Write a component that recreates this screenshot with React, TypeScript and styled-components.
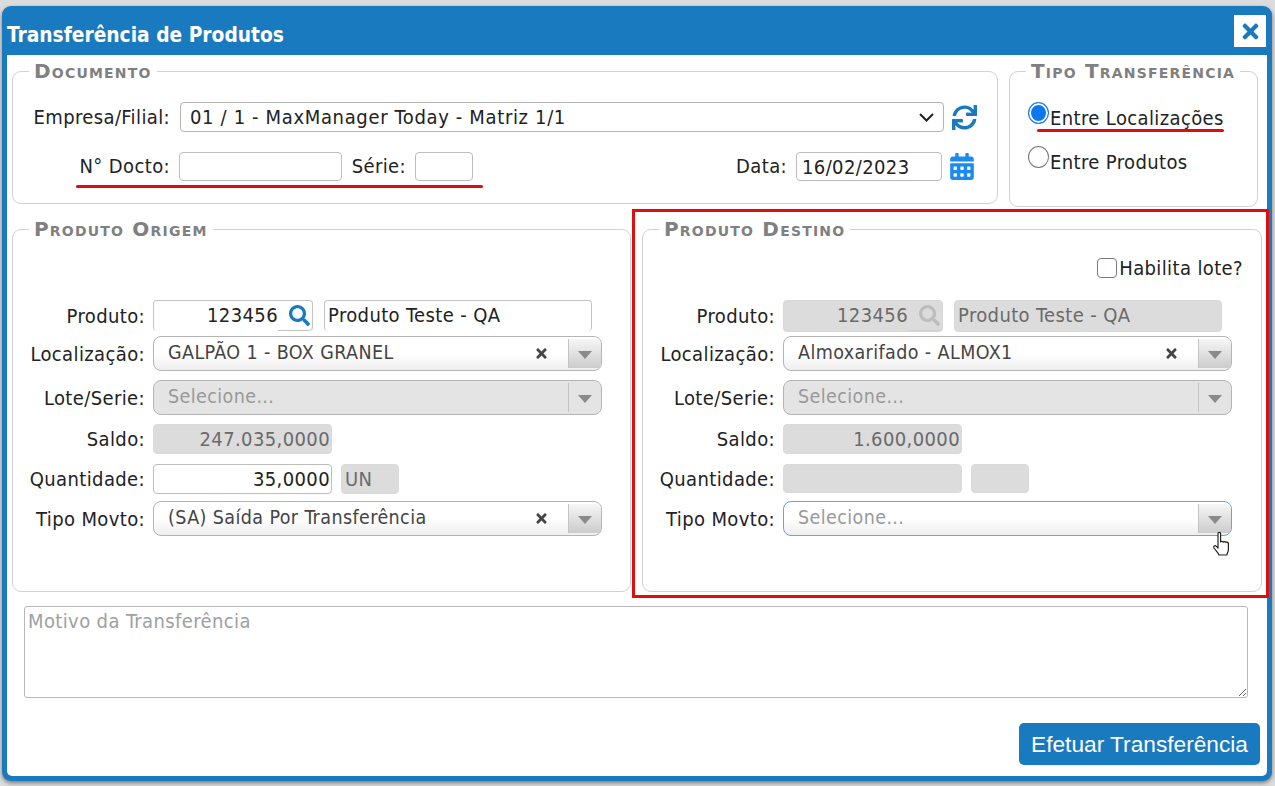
import React from "react";
import styled, { createGlobalStyle } from "styled-components";
import { FaSync, FaCalendarAlt, FaTimes, FaSearch } from "react-icons/fa";

const Global = createGlobalStyle`
  html, body { margin: 0; padding: 0; background: #dcdcdc; overflow: hidden; }
  * { box-sizing: border-box; }
`;

const BLUE = "#1a7abf";
const FONT = `"DejaVu Sans Condensed", "DejaVu Sans", sans-serif`;

const Page = styled.div`
  position: relative;
  width: 1275px;
  height: 786px;
  padding: 6px 3px 5px 2px;
  font-family: ${FONT};
  font-stretch: condensed;
  font-size: 20px;
  letter-spacing: 0.38px;
  color: #222;
`;
const Dialog = styled.div`
  height: 775px;
  background: ${BLUE};
  border-radius: 9px;
  padding: 0 5px 5px;
  display: flex;
  flex-direction: column;
  box-shadow: 0 2px 4px rgba(0, 0, 0, 0.45);
`;
const Header = styled.header`
  height: 49px;
  display: flex;
  align-items: flex-start;
  justify-content: space-between;
`;
const Title = styled.h1`
  margin: 17px 0 0;
  font-size: 20.75px;
  line-height: 24px;
  font-weight: 700;
  letter-spacing: 0;
  color: #fff;
`;
const CloseButton = styled.button`
  width: 32px;
  height: 32px;
  margin: 9px 1px 0 0;
  padding: 0;
  border: 0;
  background: #fff;
  color: ${BLUE};
  display: flex;
  align-items: center;
  justify-content: center;
  font-size: 23px;
`;
const Body = styled.main`
  flex: 1;
  background: #fff;
  border-radius: 0 0 5px 5px;
  padding: 6px 7px 11px 5px;
  display: flex;
  flex-direction: column;
`;
const TopRow = styled.div`
  display: flex;
  align-items: flex-start;
  gap: 11px;
  height: 146px;
`;
const MidRow = styled.div`
  display: flex;
  gap: 11px;
  margin-top: 12px;
`;
const Panel = styled.fieldset<{ $w: number; $h: number }>`
  width: ${(p) => p.$w}px;
  height: ${(p) => p.$h}px;
  flex: none;
  margin: 0;
  padding: 0;
  min-width: 0;
  border: 1px solid #d2d2d2;
  border-radius: 9px;
`;
const Legend = styled.legend`
  margin-left: 16px;
  padding: 0 5px;
  height: 20px;
  line-height: 20px;
  font-family: "DejaVu Sans", sans-serif;
  font-stretch: normal;
  font-size: 20px;
  letter-spacing: 1.2px;
  font-weight: 700;
  font-variant: small-caps;
  color: #808080;
`;
const DocRows = styled.div`
  padding: 21px 20px 0 0;
  display: flex;
  flex-direction: column;
  gap: 19px;
`;
const DocRow = styled.div`
  display: flex;
  align-items: center;
  height: 30px;
`;
const DocLabel = styled.label<{ $w?: number; $ml?: number }>`
  flex: none;
  width: ${(p) => (p.$w ? `${p.$w}px` : "auto")};
  margin-left: ${(p) => p.$ml ?? 0}px;
  text-align: right;
  white-space: nowrap;
`;
const NativeSelect = styled.div`
  margin-left: 10px;
  width: 765px;
  height: 30px;
  border: 1px solid #b5b5b5;
  border-radius: 4px;
  padding: 0 9px;
  display: flex;
  align-items: center;
  justify-content: space-between;
  letter-spacing: 0.65px;
  color: #222;
`;
const TextBox = styled.div<{ $w: number; $ml: number }>`
  flex: none;
  width: ${(p) => p.$w}px;
  height: 29px;
  margin-left: ${(p) => p.$ml}px;
  padding: 0 0 0 5px;
  line-height: 28px;
  white-space: nowrap;
  border: 1px solid #bdbdbd;
  border-radius: 4px;
  background: #fff;
`;
const RefreshIcon = styled(FaSync)`
  flex: none;
  margin-left: 8px;
  width: 25px;
  height: 25px;
  color: ${BLUE};
`;
const CalendarIcon = styled(FaCalendarAlt)`
  flex: none;
  margin: 0 3px 0 8px;
  width: 24px;
  height: 27px;
  color: #1a8cf0;
`;
const Push = styled.div`
  flex: 1;
`;
const RadioList = styled.div`
  padding: 21px 0 0 18px;
  display: flex;
  flex-direction: column;
  gap: 22px;
`;
const RadioRow = styled.label`
  display: flex;
  align-items: flex-start;
  height: 22px;
  line-height: 32px;
  white-space: nowrap;
`;
const Radio = styled.input`
  appearance: none;
  flex: none;
  width: 21px;
  height: 22px;
  margin: 0 1px 0 0;
  border-radius: 50%;
  border: 1.5px solid #777;
  background: #fff;
  &:checked {
    border: 1.5px solid #1a7fe8;
    box-shadow: inset 0 0 0 2px #fff;
    background: #0d78ee;
  }
`;
const PanelBody = styled.div`
  padding: 19px 0 0 0;
  display: flex;
  flex-direction: column;
`;
const CheckRow = styled.label`
  height: 20px;
  margin-bottom: 22px;
  padding-right: 18px;
  display: flex;
  justify-content: flex-end;
  align-items: center;
  white-space: nowrap;
`;
const Check = styled.input`
  appearance: none;
  flex: none;
  width: 20px;
  height: 20px;
  margin: 0 2px 0 0;
  border: 1.5px solid #777;
  border-radius: 4px;
  background: #fff;
`;
const FormRow = styled.div<{ $h: number; $mb: number }>`
  display: grid;
  grid-template-columns: 132px auto;
  justify-content: start;
  column-gap: 8px;
  height: ${(p) => p.$h}px;
  margin-bottom: ${(p) => p.$mb}px;
  align-items: center;
`;
const RowLabel = styled.label`
  text-align: right;
  white-space: nowrap;
`;
const Fields = styled.div`
  display: flex;
  height: 100%;
  align-items: stretch;
`;
const CodeField = styled.div<{ $off?: boolean }>`
  width: 160px;
  display: flex;
  justify-content: flex-end;
  line-height: 29px;
  border: 1px solid ${(p) => (p.$off ? "#d8d8d8" : "#c4c4c4")};
  border-bottom: ${(p) => (p.$off ? "1px solid #d8d8d8" : "0")};
  border-radius: 4px;
  background: ${(p) => (p.$off ? "#dcdcdc" : "#fff")};
  color: ${(p) => (p.$off ? "#6a6a6a" : "#222")};
`;
const SearchSlot = styled.div<{ $off?: boolean }>`
  width: 34px;
  padding: 4px 0 0 11px;
  border-bottom: 1px solid ${(p) => (p.$off ? "#cfcfcf" : "#c4c4c4")};
  border-radius: 0 0 4px 0;
  color: ${(p) => (p.$off ? "#bdbdbd" : BLUE)};
  font-size: 21px;
  line-height: 1;
`;
const NameField = styled.div<{ $off?: boolean }>`
  width: 268px;
  margin-left: 11px;
  padding-left: 3px;
  line-height: 29px;
  border: 1px solid ${(p) => (p.$off ? "#d8d8d8" : "#c4c4c4")};
  border-bottom: ${(p) => (p.$off ? "1px solid #d8d8d8" : "0")};
  border-radius: 4px;
  background: ${(p) => (p.$off ? "#dcdcdc" : "#fff")};
  color: ${(p) => (p.$off ? "#6a6a6a" : "#222")};
`;
const Combo = styled.div<{ $off?: boolean; $focus?: boolean }>`
  width: 449px;
  height: 35px;
  display: flex;
  align-items: stretch;
  border: 1px solid ${(p) => (p.$focus ? "#6d9fd8" : "#b4b4b4")};
  border-radius: 8px;
  overflow: hidden;
  background: ${(p) =>
    p.$off ? "#e4e4e4" : "linear-gradient(#fff 50%, #eeeeee)"};
`;
const ComboText = styled.div<{ $muted?: boolean }>`
  flex: 1;
  padding-left: 14px;
  line-height: 31px;
  font-size: 19.5px;
  letter-spacing: 0.4px;
  color: ${(p) => (p.$muted ? "#999" : "#444")};
`;
const ComboClear = styled.div`
  width: 30px;
  margin-right: 12px;
  display: flex;
  align-items: center;
  justify-content: center;
  color: #444;
  font-size: 15px;
`;
const ComboArrow = styled.div<{ $off?: boolean }>`
  flex: none;
  width: 33px;
  margin: 2px 0;
  border-left: 1px solid #c4c4c4;
  display: flex;
  align-items: center;
  justify-content: center;
  background: ${(p) =>
    p.$off ? "transparent" : "linear-gradient(#f6f6f6, #cccccc)"};
  &::after {
    content: "";
    border-style: solid;
    border-width: 8px 7px 0;
    border-color: #8a8a8a transparent transparent;
    margin-top: 2px;
  }
`;
const Amount = styled.div<{ $off?: boolean }>`
  width: 179px;
  padding-right: 1px;
  text-align: right;
  line-height: 28px;
  border: 1px solid ${(p) => (p.$off ? "#dadada" : "#bdbdbd")};
  border-radius: 4px;
  background: ${(p) => (p.$off ? "#dcdcdc" : "#fff")};
  color: ${(p) => (p.$off ? "#6a6a6a" : "#222")};
`;
const Unit = styled.div`
  width: 58px;
  margin-left: 9px;
  padding-left: 3px;
  line-height: 28px;
  border: 1px solid #dadada;
  border-radius: 4px;
  background: #dcdcdc;
  color: #6a6a6a;
`;
const Reason = styled.div`
  width: 1224px;
  height: 92px;
  margin: 14px 0 0 12px;
  padding: 2px 3px;
  border: 1px solid #b8b8b8;
  border-radius: 3px;
  color: #a0a0a0;
  overflow: auto;
  resize: both;
`;
const Footer = styled.div`
  margin-top: 25px;
  display: flex;
  justify-content: flex-end;
`;
const SubmitButton = styled.button`
  width: 241px;
  height: 42px;
  border: 0;
  padding: 0;
  border-radius: 5px;
  background: ${BLUE};
  color: #fff;
  font-family: "Liberation Sans", Arial, sans-serif;
  font-size: 22.7px;
`;
const RedLine = styled.div<{ $x: number; $y: number; $w: number }>`
  position: absolute;
  left: ${(p) => p.$x}px;
  top: ${(p) => p.$y}px;
  width: ${(p) => p.$w}px;
  height: 3px;
  border-radius: 2px;
  background: #e00d0d;
`;
const RedBox = styled.div`
  position: absolute;
  left: 632px;
  top: 209px;
  width: 637px;
  height: 389px;
  border: 3px solid #e00d0d;
  pointer-events: none;
`;
const Cursor = styled.svg`
  position: absolute;
  left: 1211px;
  top: 531px;
  width: 22px;
  height: 28px;
`;
const Chevron = styled.svg`
  width: 15px;
  height: 9px;
`;

type Side = {
  off?: boolean;
  location: string;
  saldo: string;
  qty: string;
  unit: string;
  tipo: string;
};

const ComboBox = ({ text, off, muted, clear, focus }: { text: string; off?: boolean; muted?: boolean; clear?: boolean; focus?: boolean }) => (
  <Combo $off={off} $focus={focus}>
    <ComboText $muted={muted}>{text}</ComboText>
    {clear && (
      <ComboClear>
        <FaTimes />
      </ComboClear>
    )}
    <ComboArrow $off={off} />
  </Combo>
);

const ProductPanel = ({ side, title, w }: { side: Side; title: string; w: number }) => (
  <Panel $w={w} $h={373}>
    <Legend>{title}</Legend>
    <PanelBody>
      <CheckRow>
        {side.off && (
          <>
            <Check type="checkbox" />
            Habilita lote?
          </>
        )}
      </CheckRow>
      <FormRow $h={28} $mb={8}>
        <RowLabel>Produto:</RowLabel>
        <Fields>
          <CodeField $off={side.off}>
            123456
            <SearchSlot $off={side.off}>
              <FaSearch />
            </SearchSlot>
          </CodeField>
          <NameField $off={side.off}>Produto Teste - QA</NameField>
        </Fields>
      </FormRow>
      <FormRow $h={35} $mb={9}>
        <RowLabel>Localização:</RowLabel>
        <ComboBox text={side.location} clear />
      </FormRow>
      <FormRow $h={35} $mb={9}>
        <RowLabel>Lote/Serie:</RowLabel>
        <ComboBox text="Selecione..." off muted />
      </FormRow>
      <FormRow $h={28} $mb={12}>
        <RowLabel>Saldo:</RowLabel>
        <Fields>
          <Amount $off>{side.saldo}</Amount>
        </Fields>
      </FormRow>
      <FormRow $h={29} $mb={8}>
        <RowLabel>Quantidade:</RowLabel>
        <Fields>
          <Amount $off={side.off}>{side.qty}</Amount>
          <Unit>{side.unit}</Unit>
        </Fields>
      </FormRow>
      <FormRow $h={35} $mb={0}>
        <RowLabel>Tipo Movto:</RowLabel>
        {side.off ? (
          <ComboBox text={side.tipo} muted focus />
        ) : (
          <ComboBox text={side.tipo} clear />
        )}
      </FormRow>
    </PanelBody>
  </Panel>
);

export default function App() {
  return (
    <Page>
      <Global />
      <Dialog>
        <Header>
          <Title>Transferência de Produtos</Title>
          <CloseButton aria-label="Fechar">
            <FaTimes />
          </CloseButton>
        </Header>
        <Body>
          <TopRow>
            <Panel $w={986} $h={143}>
              <Legend>Documento</Legend>
              <DocRows>
                <DocRow>
                  <DocLabel $w={157}>Empresa/Filial:</DocLabel>
                  <NativeSelect>
                    01 / 1 - MaxManager Today - Matriz 1/1
                    <Chevron viewBox="0 0 15 9">
                      <path d="M1 1l6.5 6.5L14 1" fill="none" stroke="#222" strokeWidth="2" />
                    </Chevron>
                  </NativeSelect>
                  <RefreshIcon />
                </DocRow>
                <DocRow>
                  <DocLabel $w={157}>N° Docto:</DocLabel>
                  <TextBox $w={163} $ml={9} />
                  <DocLabel $w={55} $ml={9}>Série:</DocLabel>
                  <TextBox $w={58} $ml={9} />
                  <Push />
                  <DocLabel>Data:</DocLabel>
                  <TextBox $w={146} $ml={9}>16/02/2023</TextBox>
                  <CalendarIcon />
                </DocRow>
              </DocRows>
            </Panel>
            <Panel $w={249} $h={146}>
              <Legend>Tipo Transferência</Legend>
              <RadioList>
                <RadioRow>
                  <Radio type="radio" name="tipo" defaultChecked />
                  Entre Localizações
                </RadioRow>
                <RadioRow>
                  <Radio type="radio" name="tipo" />
                  Entre Produtos
                </RadioRow>
              </RadioList>
            </Panel>
          </TopRow>
          <MidRow>
            <ProductPanel
              w={619}
              title="Produto Origem"
              side={{ location: "GALPÃO 1 - BOX GRANEL", saldo: "247.035,0000", qty: "35,0000", unit: "UN", tipo: "(SA) Saída Por Transferência" }}
            />
            <ProductPanel
              w={620}
              title="Produto Destino"
              side={{ off: true, location: "Almoxarifado - ALMOX1", saldo: "1.600,0000", qty: "", unit: "", tipo: "Selecione..." }}
            />
          </MidRow>
          <Reason>Motivo da Transferência</Reason>
          <Footer>
            <SubmitButton>Efetuar Transferência</SubmitButton>
          </Footer>
        </Body>
      </Dialog>
      <RedLine $x={76} $y={185} $w={407} />
      <RedLine $x={1037} $y={129} $w={187} />
      <RedBox />
      <Cursor viewBox="0 0 22 28">
        <path
          d="M7 2.5c0-1.6 2.6-1.6 2.6 0V11c0-.9 2.6-1.1 2.6.2 0-.9 2.6-1 2.6.4 0-.8 2.6-.8 2.6.8V18c0 3-1 4-1.6 6H8c-1-2.5-3.2-4.5-5-7-1-1.5.8-3 2.2-1.8L7 17z"
          fill="#fff"
          stroke="#222"
          strokeWidth="1.2"
          strokeLinejoin="round"
        />
      </Cursor>
    </Page>
  );
}
